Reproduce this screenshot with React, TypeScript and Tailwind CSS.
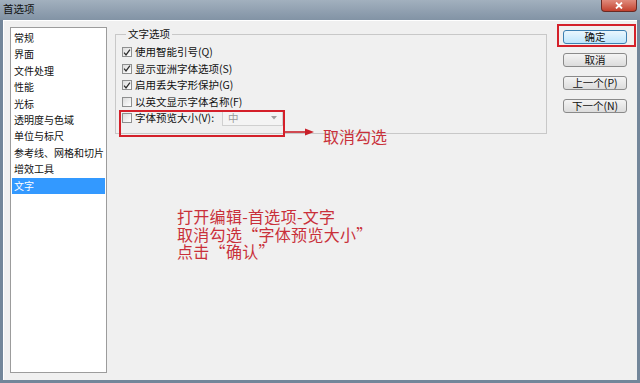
import React from 'react';

const categories = [
  '常规',
  '界面',
  '文件处理',
  '性能',
  '光标',
  '透明度与色域',
  '单位与标尺',
  '参考线、网格和切片',
  '增效工具',
  '文字',
];

const options = [
  { label: '使用智能引号(Q)', checked: true },
  { label: '显示亚洲字体选项(S)', checked: true },
  { label: '启用丢失字形保护(G)', checked: true },
  { label: '以英文显示字体名称(F)', checked: false },
];

function Check({ checked }: { checked: boolean }) {
  return (
    <span className="w-[10px] h-[10px] border border-[#8e8f8f] bg-gradient-to-br from-[#dcdcdc] to-white flex items-center justify-center shrink-0">
      {checked && (
        <svg width="9" height="9" viewBox="0 0 9 9">
          <path d="M1.2 4.6 L3.4 7.2 L7.8 1.4" fill="none" stroke="#2b2b2b" strokeWidth="1.4" />
        </svg>
      )}
    </span>
  );
}

function Btn({ label, primary }: { label: string; primary?: boolean }) {
  return (
    <div
      className={
        primary
          ? 'w-[64px] h-[14px] rounded-[3px] border border-[#3c7fb1] bg-gradient-to-b from-[#eaf6fd] to-[#bee6fd] flex items-center justify-center text-[10.5px] leading-none text-[#111]'
          : 'w-[64px] h-[14px] rounded-[3px] border border-[#8a8a8a] bg-gradient-to-b from-[#f4f4f4] to-[#dcdcdc] flex items-center justify-center text-[10.5px] leading-none text-[#111]'
      }
    >
      {label}
    </div>
  );
}

export default function App() {
  return (
    <div
      className="relative w-[640px] h-[383px] overflow-hidden flex flex-col bg-[#73869a]"
      style={{ fontFamily: '"Noto Sans CJK SC", "Noto Sans", sans-serif' }}
    >
      {/* title bar */}
      <div className="h-[20px] flex items-start justify-between bg-gradient-to-b from-[#a2b0be] to-[#8293a5] pl-[3px] pr-[3px]">
        <span className="text-[10.5px] leading-[18px] text-[#111]">首选项</span>
        <div className="w-[36px] h-[12px] rounded-b-[4px] border border-t-0 border-[#6a2a24] bg-gradient-to-b from-[#e08a7c] to-[#c2402e] flex items-center justify-center">
          <svg width="8" height="7" viewBox="0 0 8 7">
            <path d="M1 0.5 L7 6.5 M7 0.5 L1 6.5" stroke="#fff" strokeWidth="1.8" />
          </svg>
        </div>
      </div>

      {/* body */}
      <div className="flex-1 mx-[3px] mb-[3px] bg-[#f0f0f0] border-t border-l border-white flex pl-[6px] pt-[6px]">
        {/* category list */}
        <div className="w-[97px] h-[346px] border border-[#9c9c9c] bg-white px-[1px] py-[2px] text-[10px] text-[#111]">
          {categories.map((c) => (
            <div
              key={c}
              className={
                c === '文字'
                  ? 'h-[16.4px] leading-[16.4px] pl-[2px] bg-[#3399ff] text-white whitespace-nowrap'
                  : 'h-[16.4px] leading-[16.4px] pl-[2px] whitespace-nowrap'
              }
            >
              {c}
            </div>
          ))}
        </div>

        {/* main column */}
        <div className="ml-[8px] w-[432px] flex flex-col">
          <div className="relative mt-[7px] h-[100px] border border-[#c8c8c8] pl-[6px] pt-[9px] text-[10.5px] text-[#111]">
            <span className="absolute left-[10px] -top-[8px] px-[2px] bg-[#f0f0f0] leading-[14px]">文字选项</span>
            {options.map((o) => (
              <div key={o.label} className="h-[16.5px] flex items-center gap-[3px]">
                <Check checked={o.checked} />
                <span className="leading-none">{o.label}</span>
              </div>
            ))}
            <div className="h-[16.5px] flex items-center gap-[3px]">
              <Check checked={false} />
              <span className="leading-none">字体预览大小(V):</span>
              <div className="ml-[5px] w-[61px] h-[16px] border border-[#d0d0d0] bg-[#f4f4f4] flex items-center justify-between pl-[5px] pr-[5px]">
                <span className="text-[10.5px] leading-none text-[#9a9a9a]">中</span>
                <svg width="6" height="4" viewBox="0 0 6 4">
                  <path d="M0 0 L6 0 L3 3.5 Z" fill="#a0a0a0" />
                </svg>
              </div>
            </div>
          </div>

          <div className="ml-[62px] mt-[74px] text-[16px] leading-[17.5px] text-[#c9303a] tracking-[0.3px]">
            <div>打开编辑-首选项-文字</div>
            <div>取消勾选“字体预览大小”</div>
            <div>点击“确认”</div>
          </div>
        </div>

        {/* buttons */}
        <div className="ml-[16px] mt-[3px] flex flex-col gap-[9px]">
          <Btn label="确定" primary />
          <Btn label="取消" />
          <Btn label="上一个(P)" />
          <Btn label="下一个(N)" />
        </div>
      </div>

      {/* annotations */}
      <div className="absolute left-[557px] top-[24px] w-[79px] h-[23px] border-2 border-[#d4202a]" />
      <div className="absolute left-[119px] top-[110px] w-[166px] h-[27px] border-2 border-[#d4202a]" />
      <svg className="absolute left-[285px] top-[127px]" width="32" height="10" viewBox="0 0 32 10">
        <path d="M0 5 L22 5" stroke="#c8202a" strokeWidth="1.6" />
        <path d="M20 1.5 L29 5 L20 8.5 Z" fill="#c8202a" />
      </svg>
      <span className="absolute left-[323px] top-[127px] text-[16px] leading-[18px] text-[#c9303a]">取消勾选</span>
    </div>
  );
}
